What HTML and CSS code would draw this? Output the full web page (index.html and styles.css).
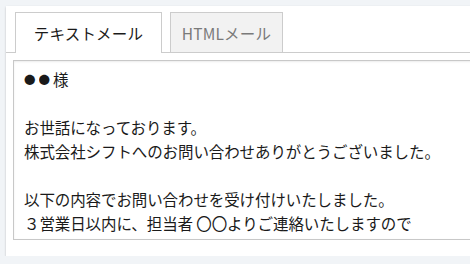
FILE: index.html
```html
<!DOCTYPE html>
<html lang="ja">
<head>
<meta charset="utf-8">
<link rel="stylesheet" href="styles.css">
</head>
<body>
<div class="panel">
  <div class="tabs">
    <div class="tab tab-active">テキストメール</div>
    <div class="tab tab-inactive">HTMLメール</div>
  </div>
  <div class="editor"><span class="dot">●</span><span class="dot">●</span>様

お世話になっております。
株式会社シフトへのお問い合わせありがとうございました。

以下の内容でお問い合わせを受け付けいたしました。
３営業日以内に、担当者 〇〇よりご連絡いたしますので
今しばらくお待ちくださいませ。</div>
</div>
</body>
</html>
```
FILE: styles.css
```css
html, body {
  margin: 0;
  padding: 0;
}
body {
  background: #f1f4f7;
  overflow: hidden;
  font-family: "Noto Sans CJK JP", "Noto Sans", sans-serif;
}
.panel {
  box-sizing: border-box;
  margin: 6px 0 0 6px;
  width: 520px;
  height: 250px;
  padding-top: 6px;
  background: #fff;
  box-shadow: 0 1px 2px rgba(0, 0, 0, 0.22);
}
.tabs {
  display: flex;
  align-items: flex-start;
  gap: 8px;
  height: 40px;
  padding-left: 9px;
  border-bottom: 1px solid #cccccc;
}
.tab {
  box-sizing: border-box;
  height: 40px;
  border: 1px solid #cccccc;
  border-bottom: none;
  display: flex;
  align-items: center;
  justify-content: center;
  font-size: 15.5px;
  letter-spacing: 0.2px;
}
.tab-active {
  width: 147px;
  height: 41px;
  margin-bottom: -1px;
  background: #fff;
  color: #1a1a1a;
}
.tab-inactive {
  width: 113px;
  background: #f2f2f2;
  color: #7a7a7a;
}
.editor {
  box-sizing: border-box;
  margin: 7px 0 0 7px;
  height: 180px;
  padding: 6px 10px;
  border: 1px solid #c8c8c8;
  box-shadow: inset 0 1px 2px rgba(0, 0, 0, 0.08);
  font-size: 15.5px;
  letter-spacing: -0.1px;
  line-height: 24px;
  color: #1a1a1a;
  white-space: pre-wrap;
  overflow: hidden;
}
.dot {
  display: inline-block;
  width: 14.5px;
  font-size: 11.5px;
  line-height: 24px;
  text-align: left;
  letter-spacing: 0;
  overflow: hidden;
  vertical-align: top;
}
```
